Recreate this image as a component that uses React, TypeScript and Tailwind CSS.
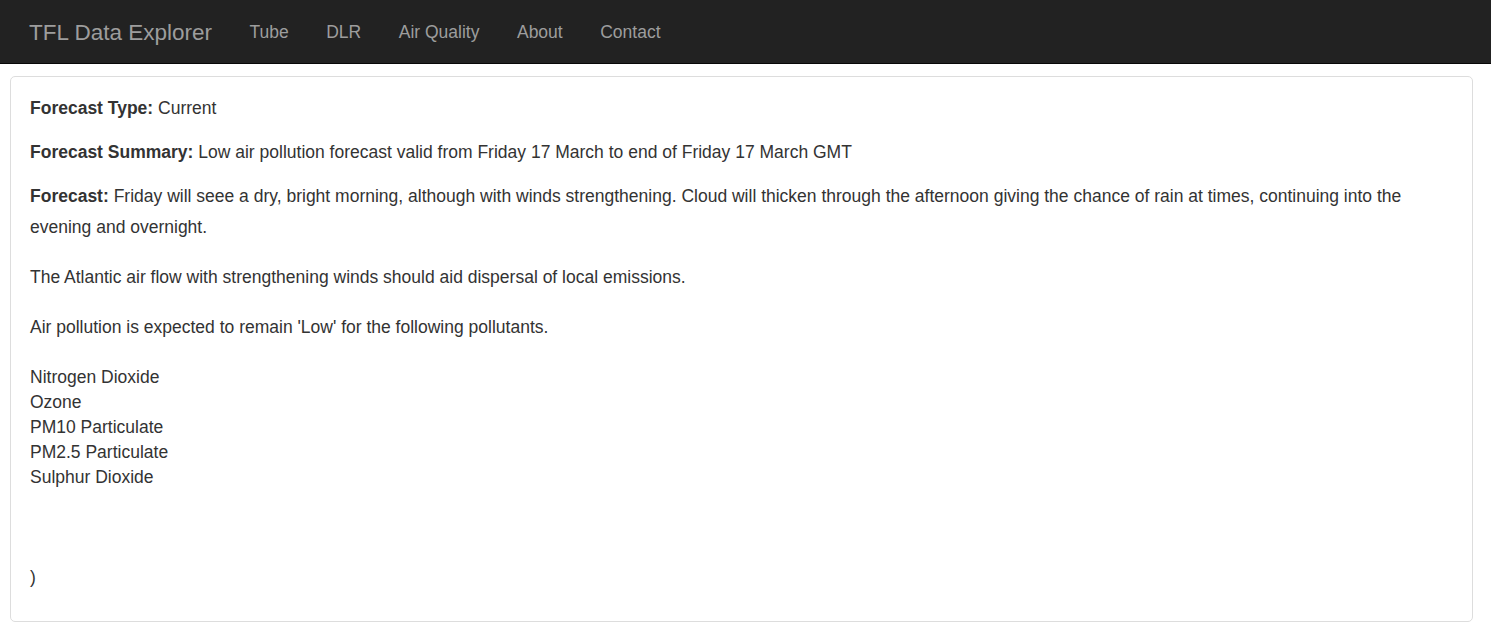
import React from "react";

const font = { fontFamily: '"Liberation Sans", Arial, Helvetica, sans-serif' };

export default function App() {
  const links = ["Tube", "DLR", "Air Quality", "About", "Contact"];
  return (
    <div className="min-h-[636px] bg-white" style={font}>
      <nav className="h-[64px] bg-[#222222] border-b border-[#080808] flex items-center pt-[2px]">
        <div className="pl-[29px] pr-[18.75px] text-[22.5px] text-[#9d9d9d] leading-[25px]">TFL Data Explorer</div>
        <ul className="flex">
          {links.map((l) => (
            <li key={l} className="px-[18.75px] text-[17.5px] leading-[25px] text-[#9d9d9d]">
              {l}
            </li>
          ))}
        </ul>
      </nav>
      <div className="ml-[10px] mt-[12px] w-[1463px] h-[546px] border border-[#dddddd] rounded-[5px] bg-white pl-[19px] pt-[16px] text-[17.5px] text-[#333333]">
        <p className="leading-[31px]">
          <b>Forecast Type:</b> Current
        </p>
        <p className="leading-[31px] mt-[13px]">
          <b>Forecast Summary:</b> Low air pollution forecast valid from Friday 17 March to end of Friday 17 March GMT
        </p>
        <p className="leading-[31px] mt-[13px] pr-[40px]">
          <b>Forecast:</b> Friday will seee a dry, bright morning, although with winds strengthening. Cloud will thicken through the afternoon giving the chance of rain at times, continuing into the evening and overnight.
        </p>
        <p className="leading-[31px] mt-[19px]">
          The Atlantic air flow with strengthening winds should aid dispersal of local emissions.
        </p>
        <p className="leading-[31px] mt-[19px]">
          Air pollution is expected to remain 'Low' for the following pollutants.
        </p>
        <div className="mt-[22px] leading-[25px]">
          <div>Nitrogen Dioxide</div>
          <div>Ozone</div>
          <div>PM10 Particulate</div>
          <div>PM2.5 Particulate</div>
          <div>Sulphur Dioxide</div>
        </div>
        <div className="mt-[75px] leading-[25px]">)</div>
      </div>
    </div>
  );
}
